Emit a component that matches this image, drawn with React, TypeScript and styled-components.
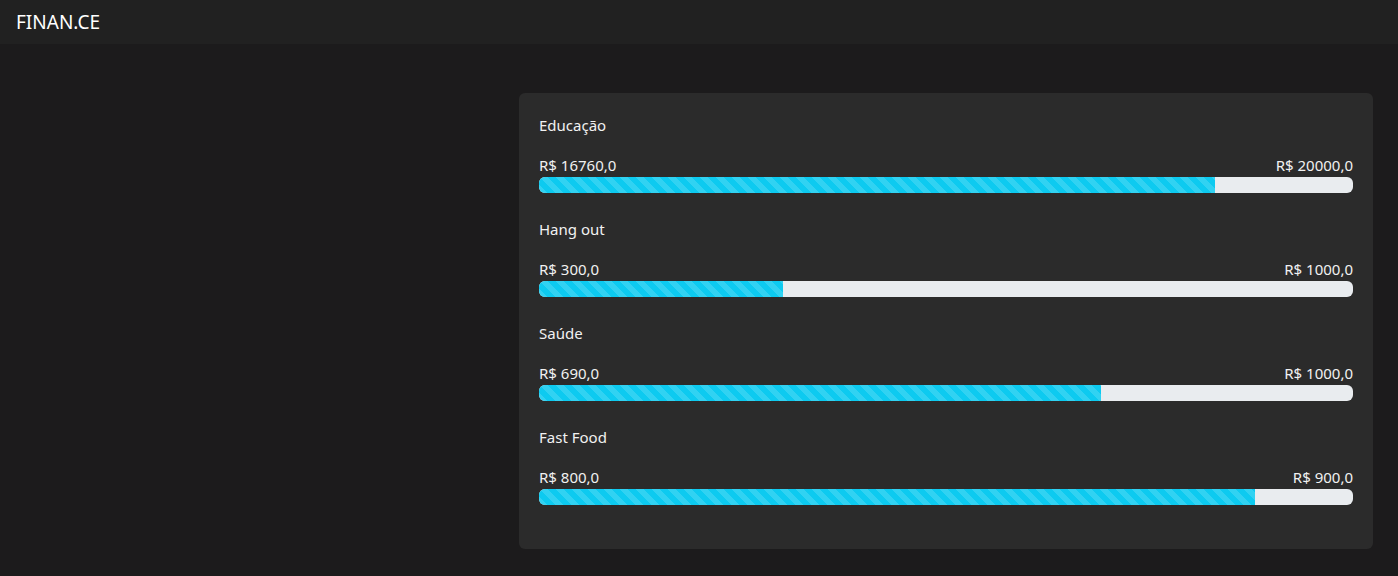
import styled, { createGlobalStyle } from "styled-components";

const GlobalStyle = createGlobalStyle`
  * { box-sizing: border-box; }
  body {
    margin: 0;
    background: #1c1b1c;
    color: #f1f1f1;
    font-family: "Noto Sans", "Open Sans", sans-serif;
  }
`;

const Navbar = styled.nav`
  height: 44px;
  background: #212121;
  display: flex;
  align-items: center;
  padding: 0 16px;
`;

const Brand = styled.span`
  font-size: 19px;
  color: #ffffff;
`;

const Main = styled.main`
  display: grid;
  grid-template-columns: 519px 1fr;
  padding: 49px 25px 0 0;
`;

const Card = styled.section`
  grid-column: 2;
  background: #2b2b2b;
  border-radius: 6px;
  padding: 20px 20px 44px;
  display: flex;
  flex-direction: column;
  gap: 24px;
`;

const Goal = styled.div`
  display: flex;
  flex-direction: column;
`;

const GoalTitle = styled.div`
  font-size: 15px;
  line-height: 24px;
  margin-bottom: 16px;
`;

const Values = styled.div`
  display: flex;
  justify-content: space-between;
  font-size: 15px;
  line-height: 24px;
`;

const Track = styled.div`
  height: 16px;
  background: #e9ecef;
  border-radius: 6px;
  overflow: hidden;
  display: flex;
`;

const Fill = styled.div`
  background-color: #0dcaf0;
  background-image: linear-gradient(
    45deg,
    rgba(255, 255, 255, 0.15) 25%,
    transparent 25%,
    transparent 50%,
    rgba(255, 255, 255, 0.15) 50%,
    rgba(255, 255, 255, 0.15) 75%,
    transparent 75%,
    transparent
  );
  background-size: 16px 16px;
`;

const goals = [
  { name: "Educação", spent: 16760, limit: 20000 },
  { name: "Hang out", spent: 300, limit: 1000 },
  { name: "Saúde", spent: 690, limit: 1000 },
  { name: "Fast Food", spent: 800, limit: 900 },
];

const money = (v: number) => `R$ ${v.toFixed(1).replace(".", ",")}`;

export default function App() {
  return (
    <>
      <GlobalStyle />
      <Navbar>
        <Brand>FINAN.CE</Brand>
      </Navbar>
      <Main>
        <Card>
          {goals.map((g) => (
            <Goal key={g.name}>
              <GoalTitle>{g.name}</GoalTitle>
              <Values>
                <span>{money(g.spent)}</span>
                <span>{money(g.limit)}</span>
              </Values>
              <Track>
                <Fill style={{ width: `${Math.floor((g.spent / g.limit) * 100)}%` }} />
              </Track>
            </Goal>
          ))}
        </Card>
      </Main>
    </>
  );
}
